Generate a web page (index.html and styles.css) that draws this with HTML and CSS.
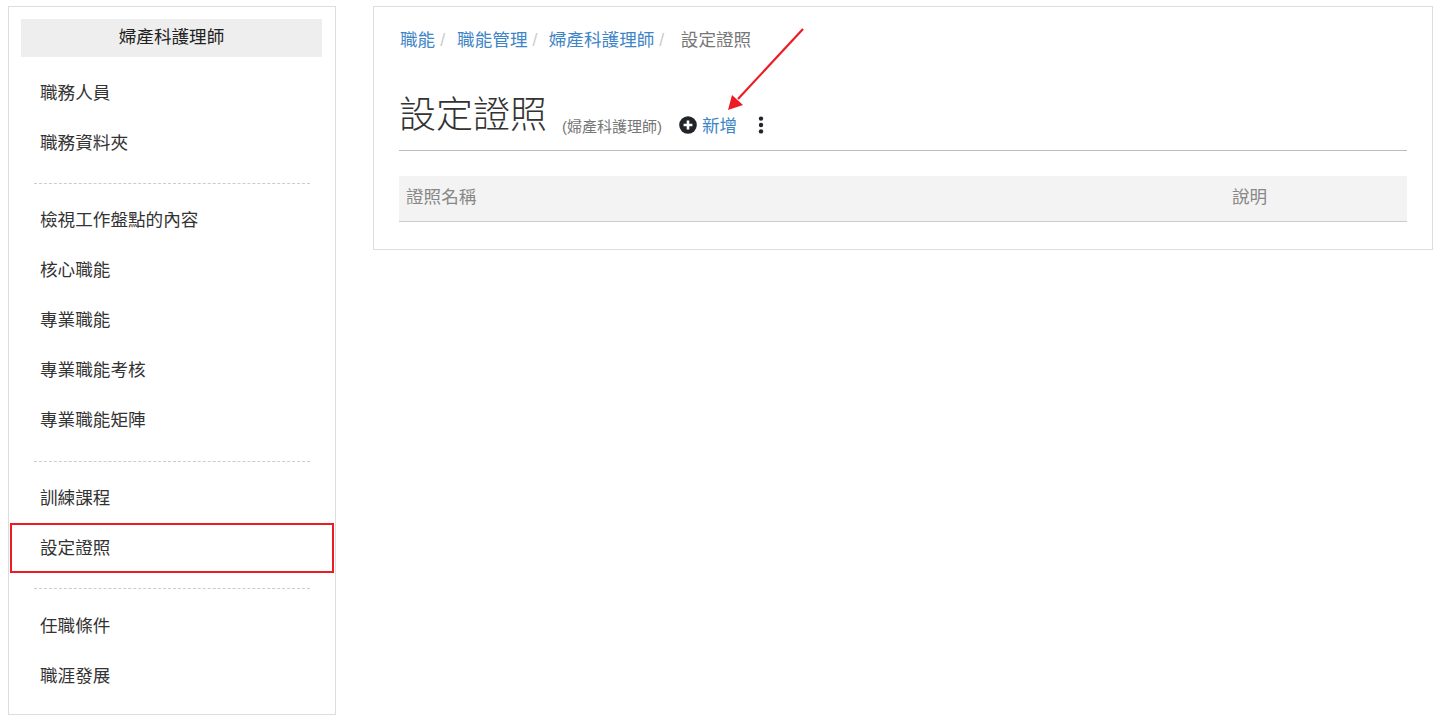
FILE: index.html
```html
<!DOCTYPE html>
<html lang="zh-TW">
  <head>
    <meta charset="UTF-8" />
    <meta name="viewport" content="width=device-width, initial-scale=1.0" />
    <title>設定證照</title>
    <link rel="stylesheet" href="styles.css">
  </head>
  <body>
    <div class="page">
      <aside class="sidebar">
        <div class="sidebar-title">婦產科護理師</div>
        <ul class="menu menu-first">
          <li><a href="#">職務人員</a></li>
          <li><a href="#">職務資料夾</a></li>
        </ul>
        <ul class="menu">
          <li><a href="#">檢視工作盤點的內容</a></li>
          <li><a href="#">核心職能</a></li>
          <li><a href="#">專業職能</a></li>
          <li><a href="#">專業職能考核</a></li>
          <li><a href="#">專業職能矩陣</a></li>
        </ul>
        <ul class="menu">
          <li><a href="#">訓練課程</a></li>
          <li class="marked"><a href="#">設定證照</a></li>
        </ul>
        <ul class="menu">
          <li><a href="#">任職條件</a></li>
          <li><a href="#">職涯發展</a></li>
        </ul>
      </aside>

      <main class="card">
        <ol class="breadcrumb">
          <li><a href="#">職能</a></li>
          <li><a href="#">職能管理</a></li>
          <li><a href="#">婦產科護理師</a></li>
          <li class="current">設定證照</li>
        </ol>

        <div class="page-header">
          <h1>設定證照</h1>
          <small>(婦產科護理師)</small>
          <a href="#" class="add-link">
            <svg class="icon-plus" viewBox="0 0 18 18" width="18" height="18">
              <circle cx="9" cy="9" r="8.8" fill="#212529" />
              <path d="M9 4.6v8.8M4.6 9h8.8" stroke="#fff" stroke-width="2.6" />
            </svg>
            新增
          </a>
          <svg class="icon-more" viewBox="0 0 6 18" width="6" height="18">
            <circle cx="3" cy="2.6" r="2.2" fill="#212529" />
            <circle cx="3" cy="9" r="2.2" fill="#212529" />
            <circle cx="3" cy="15.4" r="2.2" fill="#212529" />
          </svg>
        </div>

        <table class="cert-table">
          <thead>
            <tr>
              <th>證照名稱</th>
              <th class="col-desc">說明</th>
            </tr>
          </thead>
        </table>
      </main>

      <!-- 標示箭頭 -->
      <svg class="arrow" viewBox="0 0 90 90" width="90" height="90">
        <path d="M75 1L10 71" stroke="#ed1c24" stroke-width="2.2" fill="none" />
        <polygon points="0,82 4,67 15,77" fill="#ed1c24" />
      </svg>
    </div>
  </body>
</html>
```

FILE: styles.css
```css
* {
  box-sizing: border-box;
}
body {
  margin: 0;
  font-family: "Liberation Sans", "Noto Sans CJK TC", sans-serif;
  font-size: 17.6px;
  color: #333;
  background-color: white;
}
a {
  color: #3d85c6;
  text-decoration: none;
}
.page {
  position: relative;
  display: flex;
  align-items: flex-start;
  gap: 37px;
  padding: 6px 12px 0 8px;
}
.sidebar {
  width: 328px;
  height: 709px;
  flex-shrink: 0;
  padding: 12px 13px 0 12px;
  border: 1px solid #ddd;
}
.sidebar-title {
  height: 38px;
  line-height: 37px;
  text-align: center;
  color: #222;
  background-color: #eee;
}
.menu {
  margin: 15px 12px 0 13px;
  padding: 12px 0 0;
  list-style: none;
  border-top: 1px dashed #ccc;
}
.menu:last-child {
  margin-top: 14px;
  padding-top: 13px;
}
.menu-first {
  margin-top: 12px;
  margin-bottom: -1px;
  padding-top: 0;
  border-top: none;
}
.menu li {
  position: relative;
  height: 50px;
  margin: 0 -12px 0 -13px;
}
.menu a {
  display: block;
  height: 50px;
  padding-left: 19px;
  line-height: 48px;
  color: #333;
}
.menu .marked::after {
  content: "";
  position: absolute;
  top: -1px;
  left: -11px;
  width: 324px;
  height: 50px;
  border: 2px solid #ed1c24;
  box-sizing: border-box;
}
.card {
  flex: 1;
  height: 244px;
  padding: 18px 25px 0;
  border: 1px solid #ddd;
}
.breadcrumb {
  display: flex;
  margin: 0;
  padding: 0 0 0 1px;
  list-style: none;
  line-height: 30px;
}
.breadcrumb li:not(.current)::after {
  content: "/";
  margin: 0 12px 0 5px;
  color: #ccc;
}
.breadcrumb li:nth-child(2)::after {
  margin-right: 11.4px;
}
.breadcrumb li:nth-child(3)::after {
  margin-right: 16.6px;
}
.breadcrumb .current {
  color: #777;
}
.page-header {
  display: flex;
  align-items: baseline;
  height: 72px;
  margin-top: 24px;
  padding-top: 11px;
  border-bottom: 1px solid #bbb;
}
h1 {
  margin: 0;
  font-size: 37px;
  font-weight: 300;
  line-height: 52px;
  color: #333;
}
small {
  margin-left: 15px;
  margin-bottom: 12px;
  align-self: flex-end;
  font-size: 15px;
  line-height: 22px;
  color: #777;
}
.add-link {
  display: inline-flex;
  align-items: center;
  gap: 5px;
  margin-left: 17px;
  align-self: center;
  margin-top: 9px;
}
.icon-more {
  align-self: center;
  margin: 9px 0 0 21px;
}
.cert-table {
  width: 100%;
  margin-top: 25px;
  border-collapse: collapse;
}
.cert-table th {
  height: 45px;
  padding: 0 7px 5px;
  text-align: left;
  font-weight: 400;
  color: #888;
  background-color: #f3f3f3;
  border-bottom: 1px solid #ccc;
}
.cert-table .col-desc {
  width: 182px;
}
.arrow {
  position: absolute;
  top: 28px;
  left: 728px;
}
```
